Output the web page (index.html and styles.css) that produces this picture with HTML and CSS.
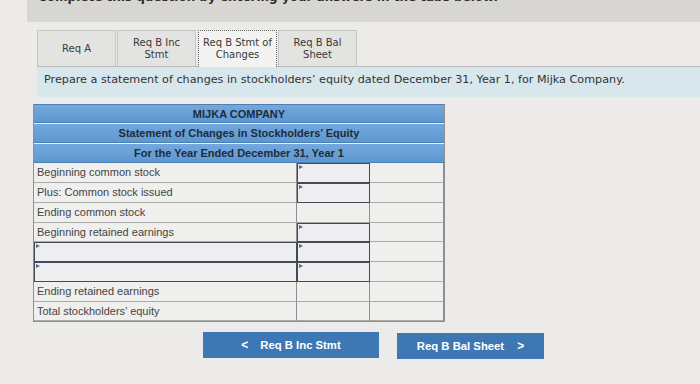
FILE: index.html
```html
<!DOCTYPE html>
<html>
<head>
<meta charset="utf-8">
<link rel="stylesheet" href="styles.css">
</head>
<body>
<div class="topbar"><div class="topbar-text">Complete this question by entering your answers in the tabs below.</div></div>
<div class="main">
  <div class="tabs">
    <div class="tab">Req A</div>
    <div class="tab">Req B Inc<br>Stmt</div>
    <div class="tab active">Req B Stmt of<br>Changes</div>
    <div class="tab">Req B Bal<br>Sheet</div>
  </div>
  <div class="instruction">Prepare a statement of changes in stockholders’ equity dated December 31, Year 1, for Mijka Company.</div>
</div>
<div class="stmt">
  <div class="hd">MIJKA COMPANY</div>
  <div class="hd">Statement of Changes in Stockholders’ Equity</div>
  <div class="hd">For the Year Ended December 31, Year 1</div>

  <div class="c lbl">Beginning common stock</div><div class="c inp"></div><div class="c"></div>
  <div class="c lbl">Plus: Common stock issued</div><div class="c inp"></div><div class="c"></div>
  <div class="c lbl">Ending common stock</div><div class="c"></div><div class="c"></div>
  <div class="c lbl">Beginning retained earnings</div><div class="c inp"></div><div class="c"></div>
  <div class="c lbl inp"></div><div class="c inp"></div><div class="c"></div>
  <div class="c lbl inp"></div><div class="c inp"></div><div class="c"></div>
  <div class="c lbl">Ending retained earnings</div><div class="c"></div><div class="c"></div>
  <div class="c lbl">Total stockholders’ equity</div><div class="c"></div><div class="c"></div>
</div>
<div class="nav">
  <div class="btn prev"><span class="chev">&lt;</span>Req B Inc Stmt</div>
  <div class="btn next">Req B Bal Sheet<span class="chev">&gt;</span></div>
</div>
</body>
</html>
```

FILE: styles.css
```css
html, body {
  margin: 0;
  padding: 0;
}
body {
  width: 700px;
  height: 384px;
  overflow: hidden;
  background: #ecebe9;
  font-family: "Liberation Sans", Arial, sans-serif;
  color: #333;
}
.topbar {
  height: 22px;
  margin-left: 27px;
  background: #d7d6d3;
  overflow: hidden;
}
.topbar-text {
  margin-top: -10px;
  margin-left: 11px;
  font-family: "DejaVu Sans", Verdana, sans-serif;
  font-weight: bold;
  font-size: 12px;
  line-height: 14px;
  color: #2a2a2a;
}
.main {
  padding-left: 37px;
  padding-top: 8px;
}
.tabs {
  display: flex;
  height: 36px;
  border-bottom: 1px solid #b9b9b9;
}
.tab {
  width: 77px;
  height: 35px;
  margin-right: 1px;
  display: flex;
  align-items: center;
  justify-content: center;
  text-align: center;
  font-family: "DejaVu Sans", Verdana, sans-serif;
  font-size: 10px;
  line-height: 12px;
  color: #3a3a3a;
  background: #e3e3e1;
  border: 1px solid #c6c6c4;
  border-bottom: none;
  box-sizing: content-box;
}
.tab:nth-child(2) { margin-right: 2px; }
.tab.active {
  background: #f3f3f1;
  border: 1px dotted #666;
  border-bottom: none;
  height: 36px;
  margin-bottom: -1px;
  position: relative;
}
.instruction {
  height: 30px;
  line-height: 26px;
  padding-left: 7px;
  background: #d8e7ec;
  font-family: "DejaVu Sans", Verdana, sans-serif;
  font-size: 11.2px;
  color: #333;
  white-space: nowrap;
}
.stmt {
  margin-left: 33px;
  margin-top: 7px;
  width: 410px;
  display: grid;
  grid-template-columns: 263px 73px 74px;
  grid-auto-rows: 19.75px;
  border-left: 1px solid #8f8f8f;
  border-right: 1px solid #8f8f8f;
  border-bottom: 1px solid #8f8f8f;
  background: #efefed;
}
.hd {
  grid-column: 1 / 4;
  height: 19.3px;
  background: linear-gradient(#74a8dc, #5d97d1);
  border-bottom: 1px solid #4c7fb2;
  text-align: center;
  font-weight: bold;
  font-size: 11px;
  line-height: 19px;
  color: #1e2c3a;
  box-sizing: border-box;
}
.hd:first-child { border-top: 1px solid #4c7fb2; }
.c {
  border-bottom: 1px solid #a9a9a7;
  border-right: 1px solid #8f8f8f;
  box-sizing: border-box;
  background: #efefed;
}
.lbl {
  font-size: 11px;
  line-height: 19px;
  padding-left: 3px;
  color: #444;
  white-space: nowrap;
}
.inp {
  position: relative;
  border: 1px solid #444a55;
  background: #eeedef;
}
.inp::before {
  content: "";
  position: absolute;
  left: 1px;
  top: 1px;
  border-left: 4px solid #4a6c93;
  border-top: 2.5px solid transparent;
  border-bottom: 2.5px solid transparent;
}
.nav {
  display: flex;
  align-items: flex-start;
  padding-left: 203px;
  margin-top: 10px;
}
.btn {
  height: 26px;
  background: #3d78b5;
  color: #fff;
  font-weight: bold;
  font-size: 11.3px;
  line-height: 26px;
  display: flex;
  align-items: center;
  justify-content: center;
  box-sizing: border-box;
}
.btn.prev {
  width: 176px;
}
.btn.next {
  width: 147px;
  margin-left: 18px;
  margin-top: 1px;
}
.prev .chev { margin-right: 12px; font-size: 12px; }
.next .chev { margin-left: 13px; font-size: 12px; }
```
